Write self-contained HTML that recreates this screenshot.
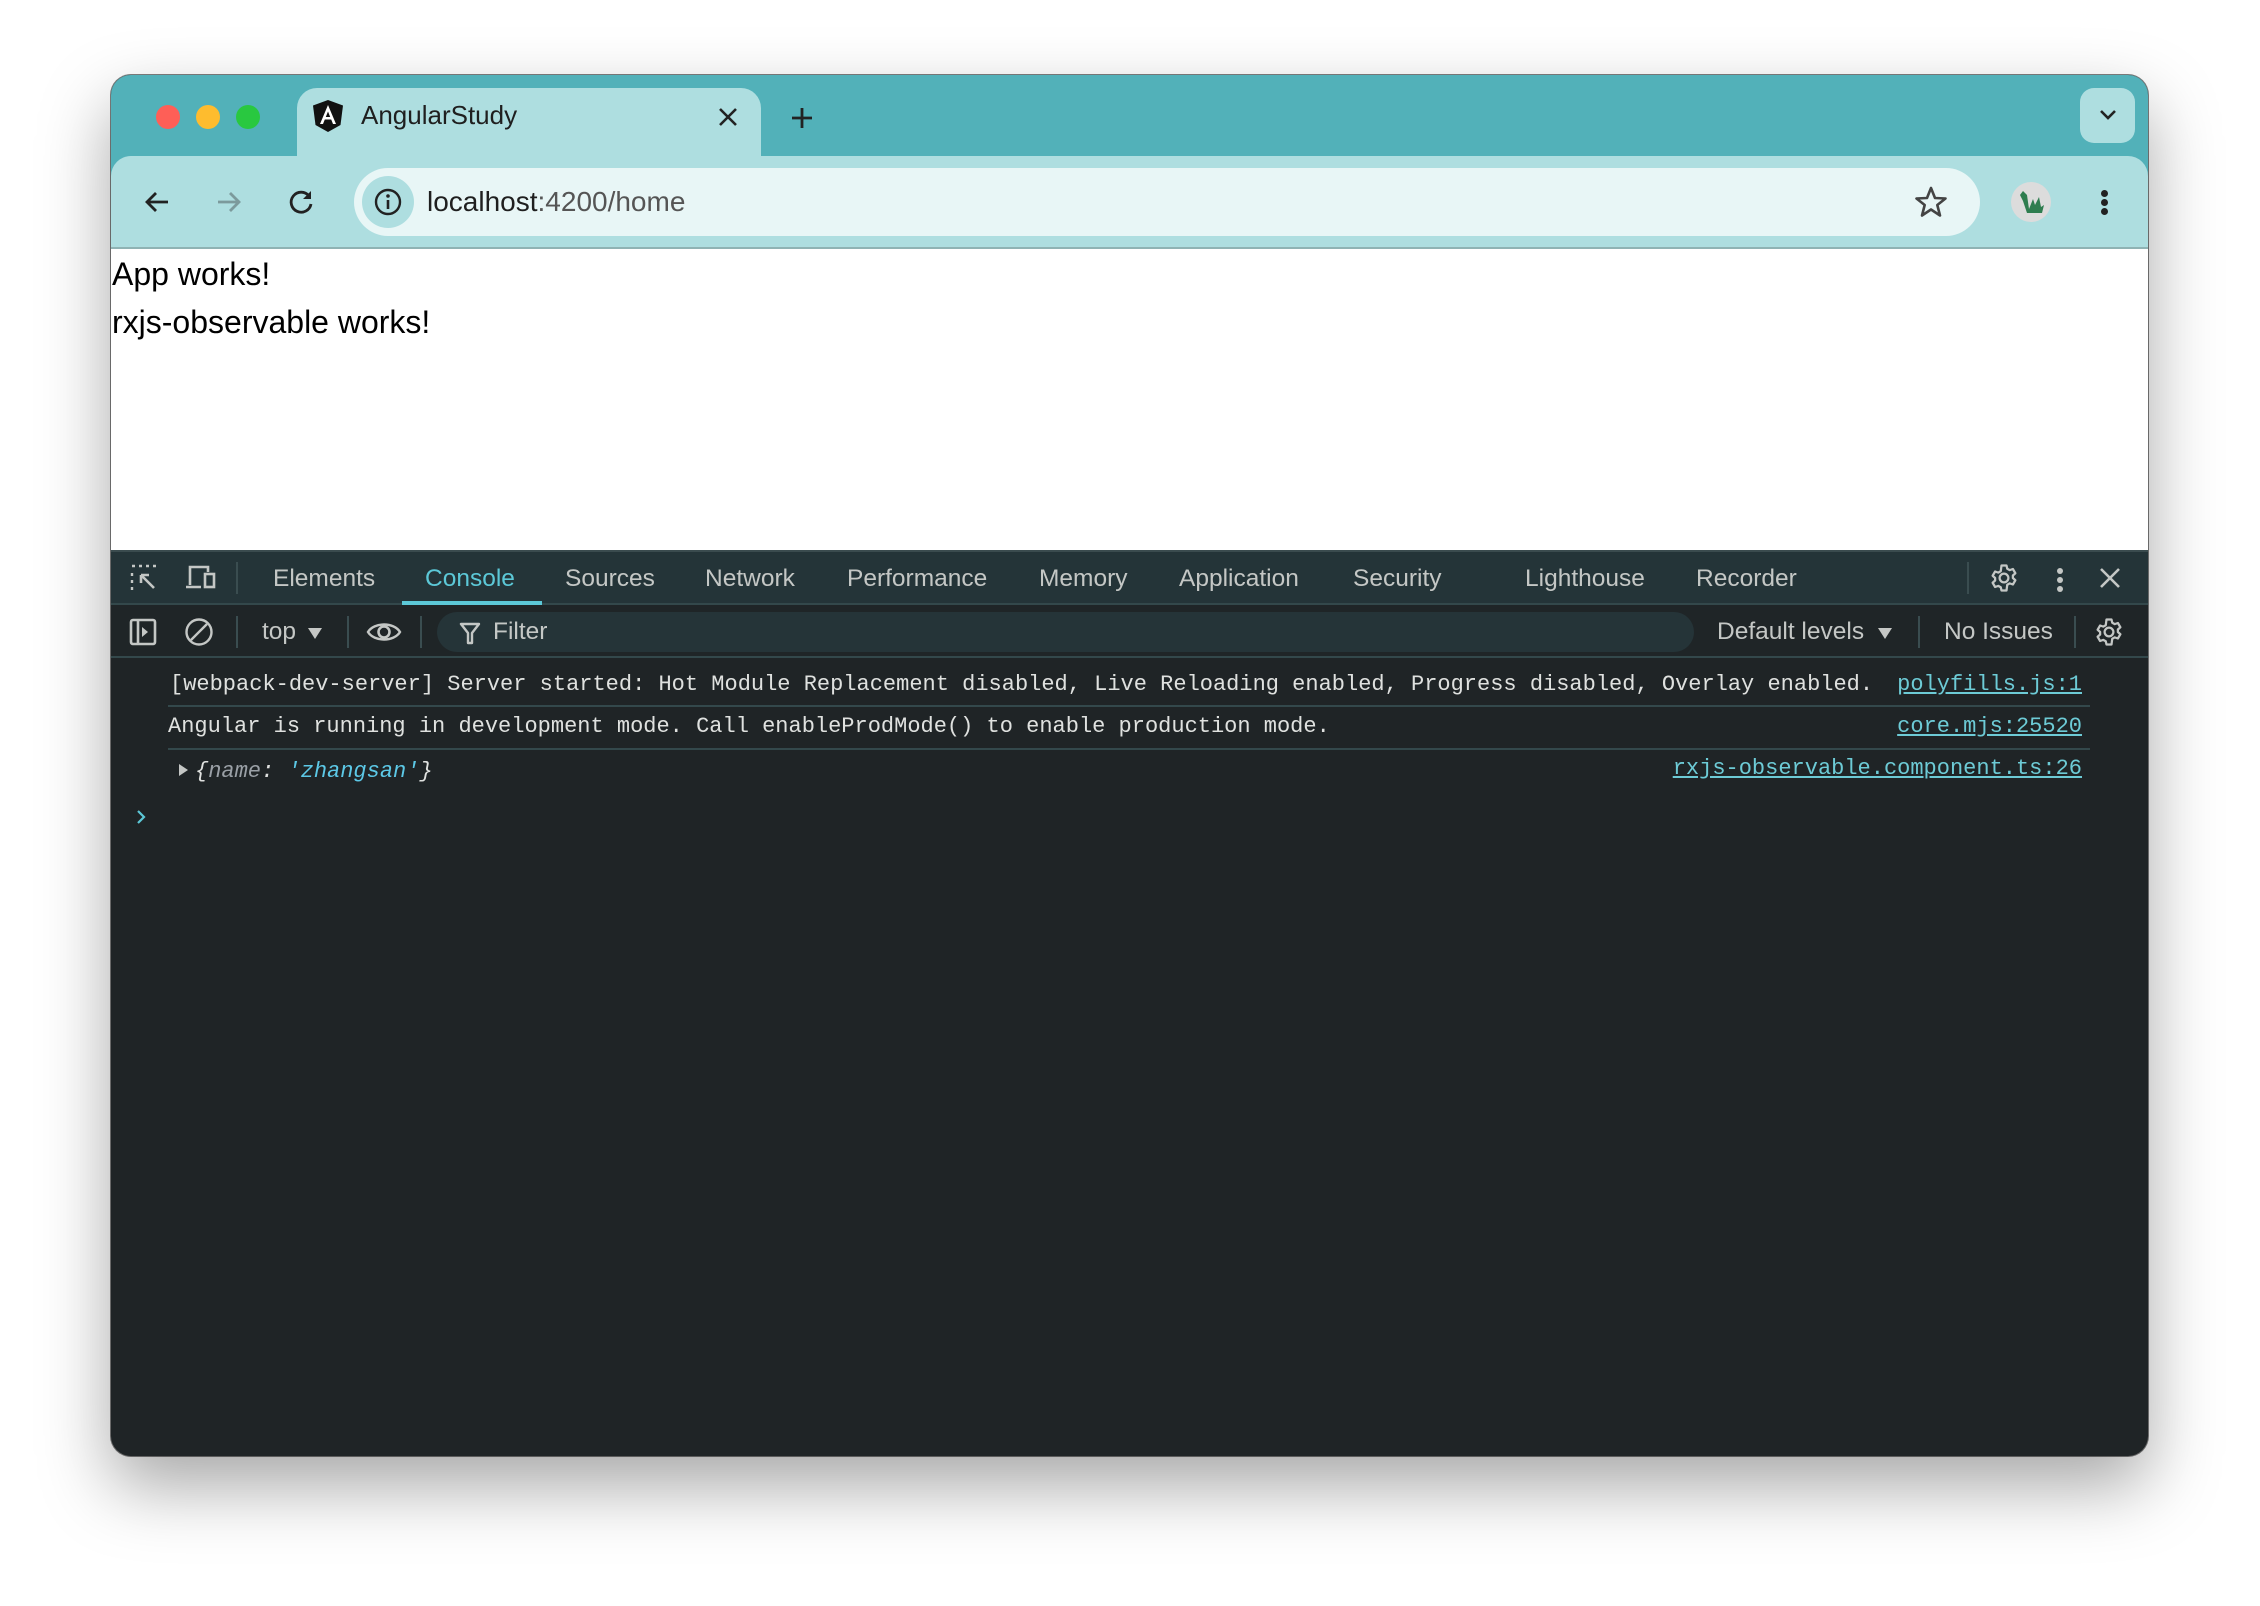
<!DOCTYPE html>
<html><head><meta charset="utf-8"><style>
*{margin:0;padding:0;box-sizing:border-box}
html,body{width:2260px;height:1606px;background:#fff;overflow:hidden;font-family:"Liberation Sans",sans-serif}
.a{position:absolute}
#win{position:absolute;left:111px;top:75px;width:2037px;height:1381px;border-radius:20px;overflow:hidden;background:#1f2426;box-shadow:0 30px 70px rgba(0,0,0,.35),0 0 0 1px rgba(0,0,0,.5)}
.dt{color:#c4c7c5;font-size:24.5px;top:17px}
.mono{font-family:"Liberation Mono",monospace;font-size:22px;color:#dfe1df;white-space:pre}
.lnk{color:#6dcbd6;text-decoration:underline}
.sep{background:#33484b;height:2px}
.vs{background:#3a4d50;width:2px}
</style></head><body>
<div id="win">
 <!-- tab strip -->
 <div class="a" style="left:0;top:0;width:2037px;height:110px;background:#52b1b9"></div>
 <div class="a" style="left:45px;top:30px;width:24px;height:24px;border-radius:50%;background:#fe5f57"></div>
 <div class="a" style="left:85px;top:30px;width:24px;height:24px;border-radius:50%;background:#febc2e"></div>
 <div class="a" style="left:125px;top:30px;width:24px;height:24px;border-radius:50%;background:#29c840"></div>
 <div class="a" style="left:186px;top:13px;width:464px;height:80px;background:#aedee0;border-radius:20px 20px 0 0"></div>
 <svg class="a" style="left:200px;top:24px" width="34" height="34" viewBox="0 0 34 34"><path d="M17 1L2 6.5 4.5 26 17 33 29.5 26 32 6.5Z" fill="#111"/><path d="M17 6L9 25h3l1.8-4.5h6.4L22 25h3Zm-2.2 12L17 12.5 19.2 18Z" fill="#fff"/></svg>
 <div class="a" style="left:250px;top:25px;font-size:26px;color:#1f1f1f">AngularStudy</div>
 <svg class="a" style="left:606px;top:31px" width="22" height="22" viewBox="0 0 22 22"><path d="M3 3L19 19M19 3L3 19" stroke="#222" stroke-width="2.6"/></svg>
 <svg class="a" style="left:679px;top:31px" width="24" height="24" viewBox="0 0 24 24"><path d="M12 2V22M2 12H22" stroke="#222" stroke-width="2.8"/></svg>
 <div class="a" style="left:1969px;top:13px;width:55px;height:55px;border-radius:14px;background:#aedee0"></div>
 <svg class="a" style="left:1987px;top:32px" width="20" height="16" viewBox="0 0 20 16"><path d="M3 4L10 11 17 4" stroke="#222" stroke-width="2.6" fill="none"/></svg>
 <!-- toolbar -->
 <div class="a" style="left:0;top:81px;width:2037px;height:93px;background:#aedee0;border-radius:20px 20px 0 0"></div>
 <div class="a" style="left:0;top:172px;width:2037px;height:2px;background:#8fb3b4"></div>
 <svg class="a" style="left:31px;top:112px" width="30" height="30" viewBox="0 0 30 30"><path d="M26 15H5M14 6L5 15 14 24" stroke="#222" stroke-width="2.8" fill="none"/></svg>
 <svg class="a" style="left:103px;top:112px" width="30" height="30" viewBox="0 0 30 30"><path d="M4 15H25M16 6L25 15 16 24" stroke="#7c9a9c" stroke-width="2.8" fill="none"/></svg>
 <svg class="a" style="left:175px;top:112px" width="30" height="30" viewBox="0 0 30 30"><path d="M23 9A10 10 0 1 0 25 17" stroke="#222" stroke-width="2.8" fill="none"/><path d="M25 4V12H17Z" fill="#222"/></svg>
 <div class="a" style="left:243px;top:93px;width:1626px;height:68px;border-radius:34px;background:#e8f6f6"></div>
 <div class="a" style="left:251px;top:101px;width:52px;height:52px;border-radius:26px;background:#aedee0"></div>
 <svg class="a" style="left:262px;top:112px" width="30" height="30" viewBox="0 0 30 30"><circle cx="15" cy="15" r="12" stroke="#222" stroke-width="2.4" fill="none"/><path d="M15 13V22" stroke="#222" stroke-width="2.6"/><circle cx="15" cy="9" r="1.8" fill="#222"/></svg>
 <div class="a" style="left:316px;top:111px;font-size:28px;color:#1f1f1f">localhost<span style="color:#555">:4200/home</span></div>
 <svg class="a" style="left:1803px;top:110px" width="34" height="34" viewBox="0 0 34 34"><path d="M17 3L21 13 31.5 13.5 23.3 20 26 30.5 17 24.5 8 30.5 10.7 20 2.5 13.5 13 13Z" stroke="#444" stroke-width="2.6" fill="none" stroke-linejoin="round"/></svg>
 <div class="a" style="left:1900px;top:107px;width:40px;height:40px;border-radius:50%;background:#dcdcdc"></div>
 <svg class="a" style="left:1904px;top:112px" width="32" height="30" viewBox="0 0 32 30"><path d="M8 4L12 8 14 22 18 12 20 18 24 10 26 20 29 18 27 26H12L8 14 5 8Z" fill="#2e7d4f"/></svg>
 <div class="a" style="left:1990px;top:115px;width:7px;height:7px;border-radius:50%;background:#222"></div>
 <div class="a" style="left:1990px;top:124px;width:7px;height:7px;border-radius:50%;background:#222"></div>
 <div class="a" style="left:1990px;top:133px;width:7px;height:7px;border-radius:50%;background:#222"></div>
 <!-- page -->
 <div class="a" style="left:0;top:174px;width:2037px;height:301px;background:#fff"></div>
 <div class="a" style="left:1px;top:175px;font-size:32px;color:#000;line-height:48px">App works!<br>rxjs-observable works!</div>
 <!-- devtools tabs -->
 <div class="a" style="left:0;top:475px;width:2037px;height:55px;background:#243438;border-top:2px solid #3a4b4e;border-bottom:2px solid #33484b"></div>
 <svg class="a" style="left:18px;top:488px" width="30" height="30" viewBox="0 0 30 30"><path d="M3 3h3M10 3h3M17 3h3M24 3h3M3 10v3M3 17v3M3 24v3" stroke="#c4c7c5" stroke-width="2.4"/><path d="M12 12L25 25M12 12V20M12 12H20" stroke="#c4c7c5" stroke-width="2.6" fill="none"/></svg>
 <svg class="a" style="left:73px;top:488px" width="34" height="30" viewBox="0 0 34 30"><path d="M6 22V4H24V9M2 24H17" stroke="#c4c7c5" stroke-width="2.6" fill="none"/><rect x="21" y="11" width="9" height="13" stroke="#c4c7c5" stroke-width="2.6" fill="none"/></svg>
 <div class="a vs" style="left:125px;top:487px;height:32px"></div>
 <div class="a dt" style="left:162px;top:490px">Elements</div>
 <div class="a dt" style="left:314px;top:490px;color:#5cc8d7">Console</div>
 <div class="a" style="left:291px;top:526px;width:140px;height:4px;background:#5cc8d7"></div>
 <div class="a dt" style="left:454px;top:490px">Sources</div>
 <div class="a dt" style="left:594px;top:490px">Network</div>
 <div class="a dt" style="left:736px;top:490px">Performance</div>
 <div class="a dt" style="left:928px;top:490px">Memory</div>
 <div class="a dt" style="left:1068px;top:490px">Application</div>
 <div class="a dt" style="left:1242px;top:490px">Security</div>
 <div class="a dt" style="left:1414px;top:490px">Lighthouse</div>
 <div class="a dt" style="left:1585px;top:490px">Recorder</div>
 <div class="a vs" style="left:1856px;top:487px;height:32px"></div>
 <svg class="a" style="left:1878px;top:488px" width="30" height="30" viewBox="0 0 24 24"><path d="M12 8.5a3.5 3.5 0 1 0 0 7 3.5 3.5 0 1 0 0-7ZM10 2h4l.6 2.6 2 1.1 2.5-.9 2 3.4-2 1.8v2l2 1.8-2 3.4-2.5-.9-2 1.1L14 22h-4l-.6-2.6-2-1.1-2.5.9-2-3.4 2-1.8v-2l-2-1.8 2-3.4 2.5.9 2-1.1Z" stroke="#c4c7c5" stroke-width="1.8" fill="none" stroke-linejoin="round"/></svg>
 <div class="a" style="left:1946px;top:493px;width:6px;height:6px;border-radius:50%;background:#c4c7c5"></div>
 <div class="a" style="left:1946px;top:502px;width:6px;height:6px;border-radius:50%;background:#c4c7c5"></div>
 <div class="a" style="left:1946px;top:511px;width:6px;height:6px;border-radius:50%;background:#c4c7c5"></div>
 <svg class="a" style="left:1987px;top:491px" width="24" height="24" viewBox="0 0 24 24"><path d="M3 3L21 21M21 3L3 21" stroke="#c4c7c5" stroke-width="2.6"/></svg>
 <!-- console toolbar -->
 <div class="a" style="left:0;top:530px;width:2037px;height:53px;background:#1f2527;border-bottom:2px solid #33484b"></div>
 <svg class="a" style="left:18px;top:543px" width="28" height="28" viewBox="0 0 28 28"><rect x="2" y="2" width="24" height="24" rx="2" stroke="#c4c7c5" stroke-width="2.6" fill="none"/><path d="M9 2V26" stroke="#c4c7c5" stroke-width="2.6"/><path d="M13 9L19 14 13 19Z" fill="#c4c7c5"/></svg>
 <svg class="a" style="left:73px;top:542px" width="30" height="30" viewBox="0 0 30 30"><circle cx="15" cy="15" r="12.5" stroke="#c4c7c5" stroke-width="2.4" fill="none"/><path d="M7 23L23 7" stroke="#c4c7c5" stroke-width="2.4"/></svg>
 <div class="a vs" style="left:125px;top:541px;height:32px"></div>
 <div class="a dt" style="left:151px;top:543px">top</div>
 <svg class="a" style="left:196px;top:551px" width="16" height="14" viewBox="0 0 16 14"><path d="M1 2H15L8 13Z" fill="#c4c7c5"/></svg>
 <div class="a vs" style="left:236px;top:541px;height:32px"></div>
 <svg class="a" style="left:255px;top:544px" width="36" height="26" viewBox="0 0 36 26"><path d="M2 13C8 3 28 3 34 13 28 23 8 23 2 13Z" stroke="#c4c7c5" stroke-width="2.4" fill="none"/><circle cx="18" cy="13" r="5.5" stroke="#c4c7c5" stroke-width="2.6" fill="none"/></svg>
 <div class="a vs" style="left:309px;top:541px;height:32px"></div>
 <div class="a" style="left:326px;top:537px;width:1257px;height:40px;border-radius:20px;background:#253438"></div>
 <svg class="a" style="left:348px;top:546px" width="22" height="24" viewBox="0 0 22 24"><path d="M2 3H20L13 12V22H9V12Z" stroke="#c4c7c5" stroke-width="2.4" fill="none" stroke-linejoin="round"/></svg>
 <div class="a dt" style="left:382px;top:543px">Filter</div>
 <div class="a dt" style="left:1606px;top:543px">Default levels</div>
 <svg class="a" style="left:1766px;top:551px" width="16" height="14" viewBox="0 0 16 14"><path d="M1 2H15L8 13Z" fill="#c4c7c5"/></svg>
 <div class="a vs" style="left:1807px;top:541px;height:32px"></div>
 <div class="a dt" style="left:1833px;top:543px">No Issues</div>
 <div class="a vs" style="left:1963px;top:541px;height:32px"></div>
 <svg class="a" style="left:1983px;top:542px" width="30" height="30" viewBox="0 0 24 24"><path d="M12 8.5a3.5 3.5 0 1 0 0 7 3.5 3.5 0 1 0 0-7ZM10 2h4l.6 2.6 2 1.1 2.5-.9 2 3.4-2 1.8v2l2 1.8-2 3.4-2.5-.9-2 1.1L14 22h-4l-.6-2.6-2-1.1-2.5.9-2-3.4 2-1.8v-2l-2-1.8 2-3.4 2.5.9 2-1.1Z" stroke="#c4c7c5" stroke-width="1.8" fill="none" stroke-linejoin="round"/></svg>
 <!-- messages -->
 <div class="a mono" style="left:59px;top:597px">[webpack-dev-server] Server started: Hot Module Replacement disabled, Live Reloading enabled, Progress disabled, Overlay enabled.</div>
 <div class="a mono lnk" style="right:66px;top:597px">polyfills.js:1</div>
 <div class="a sep" style="left:57px;top:630px;width:1922px"></div>
 <div class="a mono" style="left:57px;top:639px">Angular is running in development mode. Call enableProdMode() to enable production mode.</div>
 <div class="a mono lnk" style="right:66px;top:639px">core.mjs:25520</div>
 <div class="a sep" style="left:57px;top:673px;width:1922px"></div>
 <svg class="a" style="left:66px;top:687px" width="12" height="16" viewBox="0 0 12 16"><path d="M2 2L11 8 2 14Z" fill="#c4c7c5"/></svg>
 <div class="a mono" style="left:84px;top:684px;font-style:italic">{<span style="color:#9aa0a6">name</span>: <span style="color:#5cc8e6">'zhangsan'</span>}</div>
 <div class="a mono lnk" style="right:66px;top:681px">rxjs-observable.component.ts:26</div>
 <svg class="a" style="left:24px;top:733px" width="12" height="18" viewBox="0 0 12 18"><path d="M3 3L9 9 3 15" stroke="#5cc8d7" stroke-width="2.2" fill="none"/></svg>
</div>
</body></html>
